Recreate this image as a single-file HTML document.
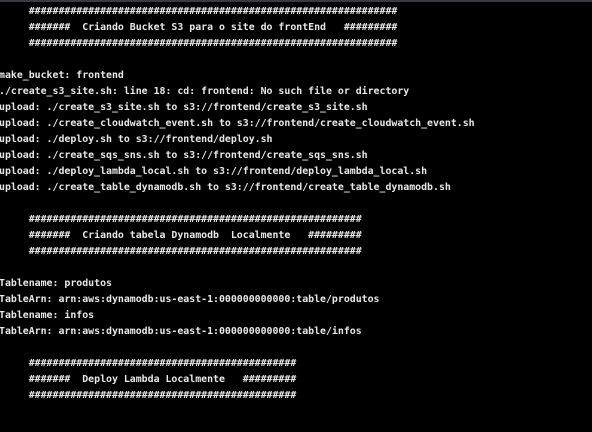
<!DOCTYPE html>
<html><head><meta charset="utf-8"><style>
html,body{margin:0;padding:0;background:#000;width:592px;height:432px;overflow:hidden}
.bar{position:absolute;left:0;top:0;width:592px;height:2px;background:#3a3b40}
pre{position:absolute;left:-1px;top:4px;margin:0;font-family:"DejaVu Sans Mono","Liberation Mono",monospace;font-weight:bold;font-size:9.9px;line-height:16px;color:#e8e8e8}
</style></head><body><div class="bar"></div><pre>     ##############################################################
     #######  Criando Bucket S3 para o site do frontEnd   #########
     ##############################################################

make_bucket: frontend
./create_s3_site.sh: line 18: cd: frontend: No such file or directory
upload: ./create_s3_site.sh to s3://frontend/create_s3_site.sh
upload: ./create_cloudwatch_event.sh to s3://frontend/create_cloudwatch_event.sh
upload: ./deploy.sh to s3://frontend/deploy.sh
upload: ./create_sqs_sns.sh to s3://frontend/create_sqs_sns.sh
upload: ./deploy_lambda_local.sh to s3://frontend/deploy_lambda_local.sh
upload: ./create_table_dynamodb.sh to s3://frontend/create_table_dynamodb.sh

     ########################################################
     #######  Criando tabela Dynamodb  Localmente   #########
     ########################################################

Tablename: produtos
TableArn: arn:aws:dynamodb:us-east-1:000000000000:table/produtos
Tablename: infos
TableArn: arn:aws:dynamodb:us-east-1:000000000000:table/infos

     #############################################
     #######  Deploy Lambda Localmente   #########
     #############################################
</pre></body></html>
